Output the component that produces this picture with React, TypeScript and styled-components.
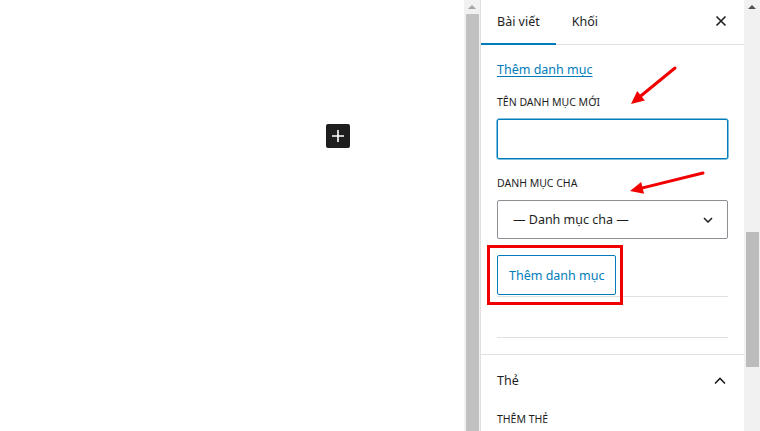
import React from 'react';
import styled, { createGlobalStyle } from 'styled-components';

const GlobalStyle = createGlobalStyle`
  html, body {
    margin: 0;
    padding: 0;
    background: #fff;
    overflow: hidden;
  }
  body {
    font-family: "Noto Sans", "Open Sans", sans-serif;
    font-size: 12px;
    color: #1e1e1e;
  }
`;

const Screen = styled.div`
  position: relative;
  display: flex;
  width: 760px;
  height: 431px;
  overflow: hidden;
`;

const Editor = styled.main`
  width: 464px;
  flex-shrink: 0;
  padding: 124px 0 0 326px;
  box-sizing: border-box;
  background: #fff;
`;

const InserterButton = styled.button`
  display: flex;
  align-items: center;
  justify-content: center;
  width: 24px;
  height: 24px;
  padding: 0;
  border: none;
  border-radius: 2px;
  background: #1e1e1e;
  color: #fff;
`;

const Scrollbar = styled.div<{ $thumbTop: number; $thumbHeight?: number; $thumb: string; $arrow: string }>`
  position: relative;
  width: 16px;
  flex-shrink: 0;
  background: #f1f1f1;

  &::before {
    content: '';
    position: absolute;
    left: 4px;
    top: 5px;
    border-left: 4px solid transparent;
    border-right: 4px solid transparent;
    border-bottom: 4px solid ${(p) => p.$arrow};
  }

  &::after {
    content: '';
    position: absolute;
    left: 2px;
    right: 1px;
    top: ${(p) => p.$thumbTop}px;
    ${(p) => (p.$thumbHeight ? `height: ${p.$thumbHeight}px;` : 'bottom: 0;')}
    background: ${(p) => p.$thumb};
  }
`;

const Sidebar = styled.aside`
  position: relative;
  width: 264px;
  flex-shrink: 0;
  border-left: 1px solid #e0e0e0;
  box-sizing: border-box;
  display: flex;
  flex-direction: column;
`;

const Header = styled.div`
  display: flex;
  align-items: stretch;
  height: 45px;
  box-sizing: border-box;
  border-bottom: 1px solid #e0e0e0;
`;

const Tab = styled.div<{ $active?: boolean }>`
  display: flex;
  align-items: center;
  padding: 0 16px 2px;
  margin-bottom: -1px;
  font-size: 12.5px;
  color: #1e1e1e;
  box-shadow: ${(p) => (p.$active ? 'inset 0 -2px 0 #007cba' : 'none')};
`;

const CloseButton = styled.div`
  margin-left: auto;
  width: 47px;
  display: flex;
  align-items: center;
  justify-content: center;
  padding-bottom: 2px;
`;

const Body = styled.div`
  display: flex;
  flex-direction: column;
  padding: 17px 16px 16px;
  border-bottom: 1px solid #e0e0e0;
`;

const AddLink = styled.a`
  align-self: flex-start;
  line-height: 16px;
  font-size: 12.5px;
  color: #007cba;
  text-decoration: underline;
  text-underline-offset: 2px;
`;

const FieldLabel = styled.div<{ $top: number }>`
  margin-top: ${(p) => p.$top}px;
  font-size: 10.5px;
  line-height: 14px;
  text-transform: uppercase;
  color: #1e1e1e;
`;

const TextInput = styled.div`
  margin-top: 10px;
  height: 40px;
  box-sizing: border-box;
  border: 1px solid #007cba;
  box-shadow: 0 0 0 0.5px #007cba;
  border-radius: 2px;
`;

const Select = styled.div`
  margin-top: 10px;
  height: 39px;
  box-sizing: border-box;
  border: 1px solid #8c8f94;
  border-radius: 2px;
  display: flex;
  align-items: center;
  justify-content: space-between;
  padding: 0 14px 0 15px;
  font-size: 12.5px;
  color: #1e1e1e;
`;

const OutlineButton = styled.button`
  align-self: flex-start;
  margin-top: 16px;
  height: 40px;
  padding: 0 11px;
  border: 1px solid #007cba;
  border-radius: 2px;
  background: #fff;
  color: #007cba;
  font: inherit;
  font-size: 12.5px;
`;

const Divider = styled.hr<{ $top: number }>`
  margin: ${(p) => p.$top}px 0 0;
  border: none;
  border-top: 1px solid #e0e0e0;
`;

const PanelTitle = styled.div`
  display: flex;
  align-items: center;
  justify-content: space-between;
  height: 51px;
  padding: 0 18px 0 16px;
  font-size: 12.5px;
`;

const PanelBody = styled.div`
  padding: 6px 16px 0;
`;

const Highlight = styled.div`
  position: absolute;
  left: 6px;
  top: 245px;
  width: 136px;
  height: 60px;
  box-sizing: border-box;
  border: 3px solid #f00000;
`;

const Annotations = styled.svg`
  position: absolute;
  left: 0;
  top: 0;
  pointer-events: none;
`;

const Arrow = ({ x1, y1, x2, y2 }: { x1: number; y1: number; x2: number; y2: number }) => {
  const a = Math.atan2(y2 - y1, x2 - x1);
  const len = 13;
  const w = 6;
  const bx = x2 - Math.cos(a) * len;
  const by = y2 - Math.sin(a) * len;
  const px = -Math.sin(a) * w;
  const py = Math.cos(a) * w;
  return (
    <g>
      <line x1={x1} y1={y1} x2={bx} y2={by} stroke="#f20000" strokeWidth={3} strokeLinecap="round" />
      <polygon points={`${x2},${y2} ${bx + px},${by + py} ${bx - px},${by - py}`} fill="#f20000" />
    </g>
  );
};

export default function App() {
  return (
    <>
      <GlobalStyle />
      <Screen>
        <Editor>
          <InserterButton aria-label="Thêm khối">
            <svg width="14" height="14" viewBox="0 0 14 14">
              <path d="M7 1v12M1 7h12" stroke="#fff" strokeWidth="1.6" />
            </svg>
          </InserterButton>
        </Editor>
        <Scrollbar $thumbTop={14} $thumb="#c1c1c1" $arrow="#a3a3a3" />
        <Sidebar>
          <Header>
            <Tab $active>Bài viết</Tab>
            <Tab>Khối</Tab>
            <CloseButton>
              <svg width="12" height="12" viewBox="0 0 12 12">
                <path d="M1.5 1.5l9 9M10.5 1.5l-9 9" stroke="#1e1e1e" strokeWidth="1.6" />
              </svg>
            </CloseButton>
          </Header>
          <Body>
            <AddLink>Thêm danh mục</AddLink>
            <FieldLabel $top={17}>Tên danh mục mới</FieldLabel>
            <TextInput />
            <FieldLabel $top={17}>Danh mục cha</FieldLabel>
            <Select>
              <span>— Danh mục cha —</span>
              <svg width="10" height="6" viewBox="0 0 10 6">
                <path d="M1 1l4 4 4-4" stroke="#1e1e1e" strokeWidth="1.5" fill="none" />
              </svg>
            </Select>
            <OutlineButton>Thêm danh mục</OutlineButton>
            <Divider $top={1} />
            <Divider $top={40} />
          </Body>
          <PanelTitle>
            <span>Thẻ</span>
            <svg width="12" height="8" viewBox="0 0 12 8">
              <path d="M1 6.5l5-5 5 5" stroke="#1e1e1e" strokeWidth="1.6" fill="none" />
            </svg>
          </PanelTitle>
          <PanelBody>
            <FieldLabel $top={0}>Thêm thẻ</FieldLabel>
          </PanelBody>
          <Highlight />
        </Sidebar>
        <Scrollbar $thumbTop={232} $thumbHeight={135} $thumb="#bcbcbc" $arrow="#505050" />
        <Annotations width="760" height="431" viewBox="0 0 760 431">
          <Arrow x1={675} y1={68} x2={631} y2={104} />
          <Arrow x1={703} y1={173} x2={630} y2={191} />
        </Annotations>
      </Screen>
    </>
  );
}
